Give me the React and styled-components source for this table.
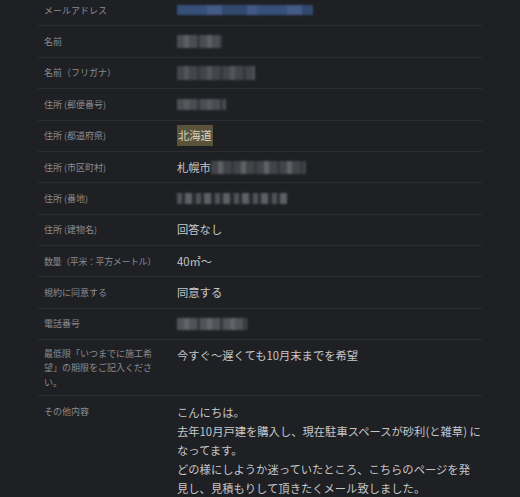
import React from "react";
import styled, { createGlobalStyle } from "styled-components";

const GlobalStyle = createGlobalStyle`
  html, body {
    margin: 0;
    padding: 0;
    background: #1f2024;
    overflow: hidden;
  }
  body {
    font-family: "Noto Sans CJK JP", "Noto Sans", sans-serif;
  }
`;

const Page = styled.div`
  width: 520px;
  height: 497px;
  overflow: hidden;
  background: #1f2024;
`;

const Table = styled.div`
  margin: -5px 0 0 38px;
  width: 444px;
`;

const Row = styled.div`
  display: grid;
  grid-template-columns: 139px 1fr;
  align-items: start;
  border-bottom: 1px solid #2c2d32;
  padding: 5.7px 0 5.4px;
`;

const Label = styled.div`
  padding: ${(p) => (p.multi ? "1px" : "3px")} 18px 0 6px;
  font-size: 9px;
  line-height: ${(p) => (p.multi ? "14.4px" : "14px")};
  color: #8a8b90;
  white-space: ${(p) => (p.multi ? "normal" : "nowrap")};
  letter-spacing: ${(p) => (p.tight ? "-0.4px" : "0")};
`;

const Value = styled.div`
  font-size: 11.3px;
  line-height: 19.3px;
  color: #c6c7ca;
  white-space: nowrap;
  display: flex;
  align-items: center;
  height: 19.3px;
`;

const Lines = styled.div`
  font-size: 11.3px;
  line-height: 18.9px;
  color: #c6c7ca;
  white-space: nowrap;
  padding-top: 1px;
`;

const Mark = styled.span`
  background: #5a5339;
  color: #d6d4c6;
  padding: 1px 1px;
`;

const Blur = styled.span`
  display: inline-block;
  width: ${(p) => p.w}px;
  height: ${(p) => p.h || 11}px;
  background: ${(p) => p.bg};
  filter: blur(1.3px);
  opacity: 0.85;
`;

const grey = (a, b) =>
  `repeating-linear-gradient(90deg, ${a} 0 7px, ${b} 7px 12px, ${a} 12px 20px, #3a3b40 20px 23px)`;

const rows = [
  {
    label: "メールアドレス",
    value: (
      <Blur
        w={136}
        h={10}
        bg="repeating-linear-gradient(90deg, #3c5988 0 30px, #4a669a 30px 45px, #37507c 45px 70px, #48639a 70px 80px)"
      />
    ),
  },
  {
    label: "名前",
    value: <Blur w={45} h={13} bg={grey("#55565b", "#6a6b70")} />,
  },
  {
    label: "名前（フリガナ）",
    value: <Blur w={78} h={14} bg={grey("#4b4c51", "#5e5f64")} />,
  },
  {
    label: "住所 (郵便番号)",
    value: <Blur w={49} h={11} bg={grey("#55565b", "#626368")} />,
  },
  { label: "住所 (都道府県)", value: <Mark>北海道</Mark> },
  {
    label: "住所 (市区町村)",
    value: (
      <>
        札幌市
        <Blur w={95} h={13} bg={grey("#4a4b50", "#6d6e72")} />
      </>
    ),
  },
  {
    label: "住所 (番地)",
    value: (
      <Blur
        w={110}
        h={11}
        bg="repeating-linear-gradient(90deg, #5b5c61 0 5px, #2a2b30 5px 8px, #6a6b70 8px 15px, #2a2b30 15px 19px)"
      />
    ),
  },
  { label: "住所 (建物名)", value: "回答なし" },
  { label: "数量（平米：平方メートル）", tight: true, value: "40㎡〜" },
  { label: "規約に同意する", value: "同意する" },
  {
    label: "電話番号",
    value: <Blur w={70} h={12} bg={grey("#5c5d62", "#6f7075")} />,
  },
  {
    label: "最低限「いつまでに施工希望」の期限をご記入ください。",
    multi: true,
    value: "今すぐ〜遅くても10月末までを希望",
  },
];

const message = [
  "こんにちは。",
  "去年10月戸建を購入し、現在駐車スペースが砂利(と雑草) に",
  "なってます。",
  "どの様にしようか迷っていたところ、こちらのページを発",
  "見し、見積もりして頂きたくメール致しました。",
];

export default function App() {
  return (
    <Page>
      <GlobalStyle />
      <Table>
        {rows.map((r) => (
          <Row key={r.label}>
            <Label multi={r.multi} tight={r.tight}>
              {r.label}
            </Label>
            <Value>{r.value}</Value>
          </Row>
        ))}
        <Row>
          <Label>その他内容</Label>
          <Lines>
            {message.map((line) => (
              <div key={line}>{line}</div>
            ))}
          </Lines>
        </Row>
      </Table>
    </Page>
  );
}
